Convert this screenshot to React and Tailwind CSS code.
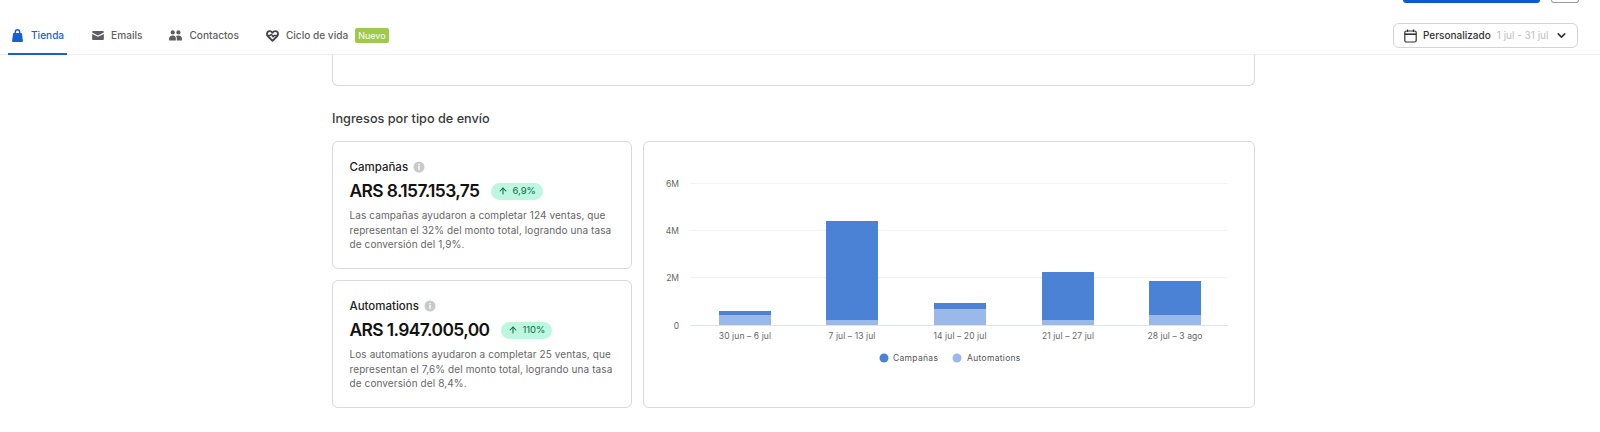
import React from 'react';
import { ChevronDown, ArrowUp } from 'lucide-react';

const BagIcon = () => (
    <svg width="11" height="13" viewBox="0 0 11 13" fill="none">
        <path d="M3.300 5V3a2.200 2.200 0 0 1 4.400 0v2" stroke="#1a5fd0" strokeWidth="1.400" />
        <path d="M1.800 4h7.400a.8.8 0 0 1 .8.7l.9 7a1.100 1.100 0 0 1-1.100 1.300H1.200A1.100 1.100 0 0 1 .1 11.700l.9-7a.8.8 0 0 1 .8-.7z" fill="#1a5fd0" />
    </svg>
);

const MailIcon = () => (
    <svg width="12" height="9" viewBox="0 0 13 10" fill="#5f5f5f">
        <path d="M1 0h11a1 1 0 0 1 1 1v.7L6.500 4.900 0 1.700V1a1 1 0 0 1 1-1z" />
        <path d="M0 3.200l6.500 3.200L13 3.200V9a1 1 0 0 1-1 1H1a1 1 0 0 1-1-1z" />
    </svg>
);

const PeopleIcon = () => (
    <svg width="13" height="11" viewBox="0 0 14 12" fill="#5f5f5f">
        <circle cx="4" cy="2.600" r="2.300" />
        <circle cx="10.200" cy="2.600" r="2.300" />
        <path d="M0 11.500V9.200C0 7.300 1.800 6 4 6s3.400 1.300 3.400 3.200v2.300z" />
        <path d="M8.400 11.500V9c0-1-.3-1.900-.9-2.500.7-.4 1.600-.6 2.600-.6 2.200 0 3.900 1.300 3.900 3.200v2.400z" />
    </svg>
);

const HeartIcon = () => (
    <svg width="13" height="12" viewBox="0 0 14 13" fill="none" stroke="#444" strokeWidth="2" strokeLinejoin="round">
        <path d="M7 11.800L1.800 6.500A3 3 0 0 1 1 4.300 3 3 0 0 1 4 1.200C5.300 1.200 6.300 1.900 7 3c.7-1.100 1.700-1.800 3-1.800a3 3 0 0 1 3 3.100c0 .8-.3 1.600-.8 2.200z" />
        <path d="M1.500 6h3l1.300-1.500 1.800 3 1.200-1.500h3.500" strokeWidth="1.500" />
    </svg>
);

const CalendarIcon = () => (
    <svg width="13" height="14" viewBox="0 0 13 14" fill="none" stroke="#333" strokeWidth="1.200">
        <rect x="0.800" y="2" width="11.400" height="11" rx="1.500" />
        <path d="M0.800 5.200h11.400" strokeWidth="1.600" />
        <path d="M3.500 0.500v2.500M9.500 0.500v2.500" />
    </svg>
);

const InfoDot = () => (
    <svg width="12" height="12" viewBox="0 0 12 12">
        <circle cx="6" cy="6" r="5.500" fill="#c9c9c9" />
        <rect x="5.300" y="5" width="1.400" height="3.800" fill="#fff" />
        <rect x="5.300" y="2.900" width="1.400" height="1.400" fill="#fff" />
    </svg>
);

const tabs = [
    { label: 'Tienda', icon: <BagIcon />, active: true },
    { label: 'Emails', icon: <MailIcon /> },
    { label: 'Contactos', icon: <PeopleIcon /> },
    { label: 'Ciclo de vida', icon: <HeartIcon />, nuevo: true },
];

const bars = [
    { x: 719, label: '30 jun – 6 jul', top: 311, split: 315 },
    { x: 826, label: '7 jul – 13 jul', top: 221, split: 320 },
    { x: 934, label: '14 jul – 20 jul', top: 303, split: 309 },
    { x: 1042, label: '21 jul – 27 jul', top: 272, split: 320 },
    { x: 1149, label: '28 jul – 3 ago', top: 281, split: 315 },
];

const ticks = [
    { label: '6M', y: 183 },
    { label: '4M', y: 230 },
    { label: '2M', y: 277 },
    { label: '0', y: 325 },
];

const StatCard = ({ title, value, delta, lines }) => (
    <div className="h-[128px] rounded-md border border-[#d9d9d9] bg-white pl-[16.500px] pt-[18px]">
        <div className="flex items-center gap-[5px] h-[14px] text-[11.500px] leading-[14px] font-medium text-[#222]">
            {title}
            <InfoDot />
        </div>
        <div className="flex items-center mt-[7px] h-[20px]">
            <span className="text-[17.400px] leading-[20px] font-semibold tracking-[-0.600px] text-[#111]">{value}</span>
            <span className="ml-[12px] flex items-center gap-[4px] h-[17px] px-[7px] rounded-full bg-[#bdf7e0] text-[9.500px] text-[#0f6b4c]">
                <ArrowUp size={10} strokeWidth={2.500} />
                {delta}
            </span>
        </div>
        <div className="mt-[7px] text-[10px] leading-[14.500px] tracking-[0.1px] text-[#666]">
            {lines.map((l) => (
                <div key={l} className="whitespace-nowrap">{l}</div>
            ))}
        </div>
    </div>
);

const Chart = () => (
    <svg width="610" height="265" viewBox="644 142 610 265" className="block" style={{ fontFamily: 'Inter, sans-serif' }}>
        {ticks.map((t) => (
            <g key={t.label}>
                <line x1="690" x2="1228" y1={t.y + 0.5} y2={t.y + 0.5} stroke={t.label === '0' ? '#dfe3ec' : '#f3f3f5'} />
                <text x="679" y={t.y + 3.500} textAnchor="end" fontSize="8.500" fill="#666">{t.label}</text>
            </g>
        ))}
        {bars.map((b) => (
            <g key={b.label}>
                <rect x={b.x} y={b.top} width="52" height={b.split - b.top} fill="#4c82d6" />
                <rect x={b.x} y={b.split} width="52" height={325 - b.split} fill="#9ab9e8" />
                <text x={b.x + 26} y="339" textAnchor="middle" fontSize="8.500" letterSpacing="0.1" fill="#666">{b.label}</text>
            </g>
        ))}
        <circle cx="884" cy="358" r="4.500" fill="#4c82d6" />
        <text x="893" y="361" fontSize="8.500" letterSpacing="0.3" fill="#555">Campañas</text>
        <circle cx="957" cy="358" r="4.500" fill="#9ab9e8" />
        <text x="967" y="361" fontSize="8.500" letterSpacing="0.3" fill="#555">Automations</text>
    </svg>
);

const App = () => {
    return (
        <div className="w-[1600px] h-[432px] overflow-hidden bg-white font-['Inter',sans-serif]">
            {/* Top of the cut-off action buttons */}
            <div className="flex justify-end gap-[11px] h-[3px] pr-[21px]">
                <div className="w-[137px] h-[3px] rounded-b-[3px] bg-[#0a5bd3]" />
                <div className="w-[28px] h-[3px] rounded-b-[3px] border border-t-0 border-[#9a9a9a]" />
            </div>

            {/* Tabs */}
            <div className="flex justify-between h-[52px] border-b border-[#eeeeee] pl-[8px] pr-[22px]">
                <div className="flex gap-[21px]">
                    {tabs.map((t) => (
                        <div
                            key={t.label}
                            className={`flex items-center gap-[7px] h-[52px] px-[3px] pt-[15px] text-[10.100px] font-medium ${
                                t.active ? 'border-b-2 border-[#1a5fd0] text-[#1a5fd0]' : 'pb-[2px] text-[#5f5f5f]'
                            }`}
                        >
                            <span className="flex justify-center w-[13px]">{t.icon}</span>
                            {t.label}
                            {t.nuevo && (
                                <span className="h-[15px] px-[3px] rounded-[2px] bg-[#9fc94a] text-[9px] leading-[15px] font-normal text-white">Nuevo</span>
                            )}
                        </div>
                    ))}
                </div>
                <div className="flex items-center w-[185px] h-[25px] mt-[20px] rounded-md border border-[#d4d4d4] pl-[10px] pr-[9px] text-[10px]">
                    <CalendarIcon />
                    <span className="ml-[6px] font-medium text-[#333]">Personalizado</span>
                    <span className="ml-[6px] text-[#bdbdbd]">1 jul - 31 jul</span>
                    <ChevronDown size={13} strokeWidth={3} className="ml-auto text-[#333]" />
                </div>
            </div>

            {/* Content */}
            <div className="ml-[332px] w-[923px]">
                <div className="h-[31px] rounded-b-md border border-t-0 border-[#d9d9d9]" />
                <h2 className="mt-[24px] h-[18px] text-[12.700px] leading-[18px] font-medium text-[#3a3a3a]">Ingresos por tipo de envío</h2>
                <div className="flex gap-[11px] mt-[13px]">
                    <div className="flex flex-col gap-[11px] w-[300px]">
                        <StatCard
                            title="Campañas"
                            value="ARS 8.157.153,75"
                            delta="6,9%"
                            lines={[
                                'Las campañas ayudaron a completar 124 ventas, que',
                                'representan el 32% del monto total, logrando una tasa',
                                'de conversión del 1,9%.',
                            ]}
                        />
                        <StatCard
                            title="Automations"
                            value="ARS 1.947.005,00"
                            delta="110%"
                            lines={[
                                'Los automations ayudaron a completar 25 ventas, que',
                                'representan el 7,6% del monto total, logrando una tasa',
                                'de conversión del 8,4%.',
                            ]}
                        />
                    </div>
                    <div className="flex-1 h-[267px] rounded-md border border-[#d9d9d9] overflow-hidden">
                        <Chart />
                    </div>
                </div>
            </div>
        </div>
    );
};

export default App;
